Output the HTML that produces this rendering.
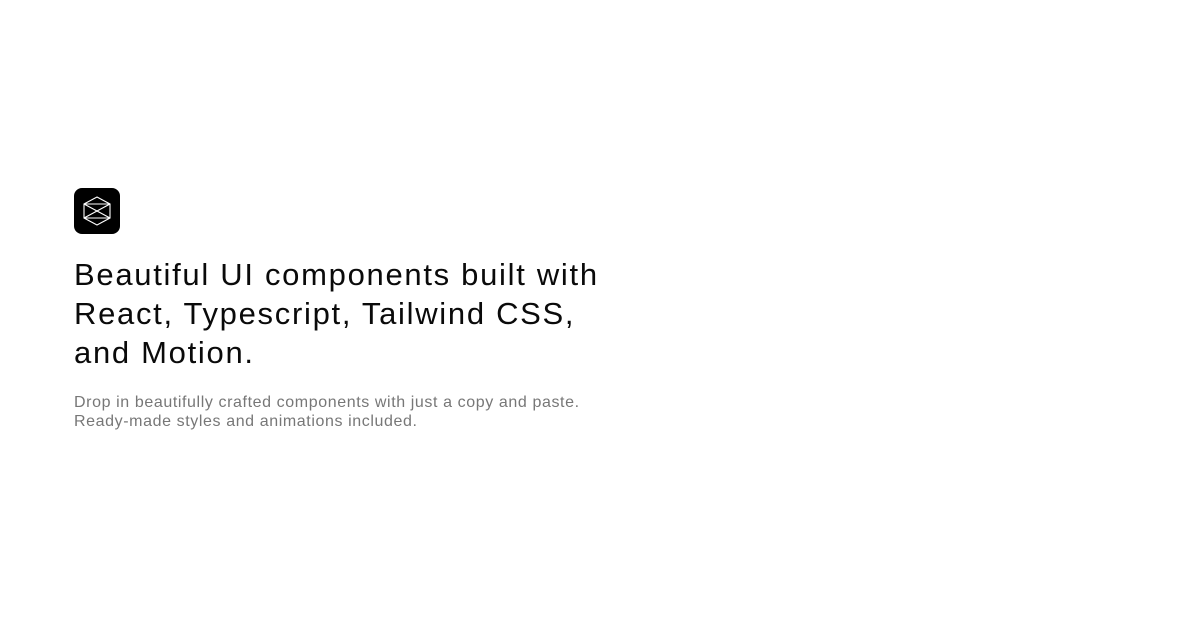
<!DOCTYPE html>
<html><head><meta charset="utf-8"><style>
html,body{margin:0;padding:0;background:#fff;width:1200px;height:620px;overflow:hidden;font-family:"Liberation Sans",sans-serif}
.logo{position:absolute;left:74px;top:188px;width:46px;height:46px;background:#000;border-radius:8px}
h1{position:absolute;left:74px;top:255px;margin:0;font-size:31px;line-height:39px;font-weight:400;color:#0a0a0a;letter-spacing:1.7px;width:700px;white-space:nowrap}
p{position:absolute;left:74px;top:393px;margin:0;font-size:16px;line-height:19px;color:#777;width:700px;letter-spacing:0.6px;white-space:nowrap}
</style></head><body>
<div class="logo"><svg width="46" height="46" viewBox="0 0 46 46" fill="none" stroke="#fff" stroke-width="1.1">
<polygon points="23,9 36,16 36,30 23,37 10,30 10,16"/>
<line x1="10" y1="16" x2="36" y2="16"/>
<line x1="10" y1="30" x2="36" y2="30"/>
<line x1="10" y1="16" x2="36" y2="30"/>
<line x1="36" y1="16" x2="10" y2="30"/>
</svg></div>
<h1>Beautiful UI components built with<br>React, Typescript, Tailwind CSS,<br>and Motion.</h1>
<p>Drop in beautifully crafted components with just a copy and paste.<br>Ready-made styles and animations included.</p>
</body></html>
